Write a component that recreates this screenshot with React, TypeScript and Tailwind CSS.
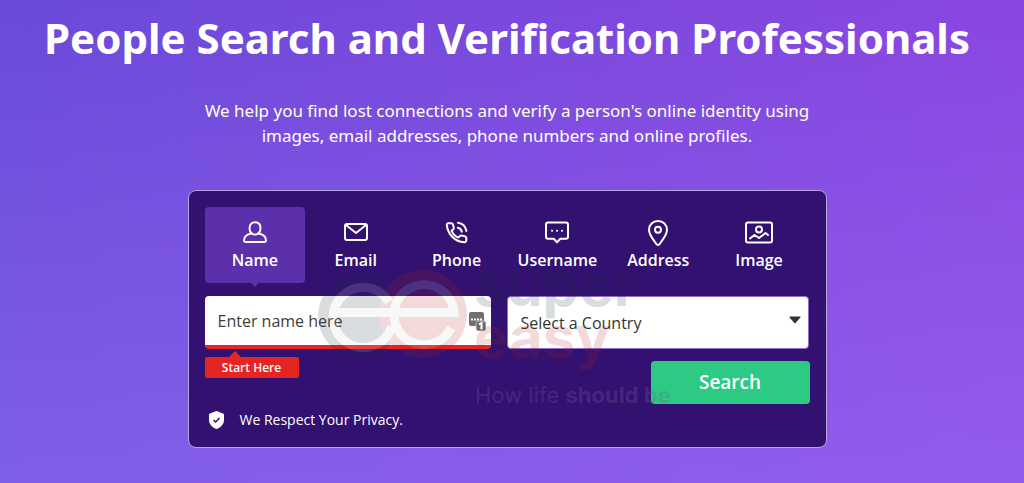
import type { ReactNode } from "react";

const stroke = {
  fill: "none",
  stroke: "currentColor",
  strokeWidth: 2,
  strokeLinecap: "round" as const,
  strokeLinejoin: "round" as const,
  "aria-hidden": true,
};

const tabs: { label: string; icon: ReactNode }[] = [
  {
    label: "Name",
    icon: (
      <svg width="28" height="28" viewBox="0 0 28 28" {...stroke}>
        <path d="M10.600 14.200C9.200 13 8.500 11.200 8.500 9.200 8.500 5.600 10.700 3.300 14 3.300s5.500 2.300 5.500 5.900c0 2-.7 3.800-2.100 5-1.900 1.700-4.900 1.700-6.800 0Z" />
        <path d="M10.600 14.600C6 15.300 3 18 3 21.600c0 .9.500 1.400 1.400 1.400h19.200c.9 0 1.400-.5 1.400-1.400 0-3.600-3-6.300-7.600-7" />
      </svg>
    ),
  },
  {
    label: "Email",
    icon: (
      <svg width="28" height="28" viewBox="0 0 28 28" {...stroke}>
        <rect x="3" y="5" width="22" height="16" rx="2" />
        <path d="m4 6 10 8 10-8" />
      </svg>
    ),
  },
  {
    label: "Phone",
    icon: (
      <svg width="28" height="28" viewBox="0 0 28 28" {...stroke}>
        <path d="M5.300 4.200h3c.8 0 1.400.4 1.600 1.100l.9 3.400c.2.600 0 1.200-.5 1.600l-1.700 1.500c1.400 3.200 3.700 5.500 6.800 6.800l1.500-1.600c.4-.5 1-.7 1.600-.5l3.700.9c.7.200 1.100.8 1.100 1.500v2.400c0 1.300-.8 2-2.100 1.900C11.800 22.600 5 15.400 3.800 6.300c-.1-1.200.4-2.100 1.500-2.100Z" />
        <path d="M14.800 8.700c2.200.5 3.500 1.900 4 4M15 3.800c4.400.6 7.600 3.800 8.400 8.200" />
      </svg>
    ),
  },
  {
    label: "Username",
    icon: (
      <svg width="28" height="28" viewBox="0 0 28 28" {...stroke}>
        <path d="M5 3.500h18c1.100 0 2 .9 2 2v12.200c0 1.100-.9 2-2 2h-5.700L14 23.300l-3.300-3.600H5c-1.100 0-2-.9-2-2V5.500c0-1.100.9-2 2-2Z" />
        <path d="M9 11.800h.1M14 11.800h.1M19 11.800h.1" />
      </svg>
    ),
  },
  {
    label: "Address",
    icon: (
      <svg width="28" height="28" viewBox="0 0 28 28" {...stroke}>
        <path d="M14 2c-5.200 0-9 3.900-9 8.800 0 5.400 4.500 10 7.300 14.200.8 1.200 2.600 1.200 3.400 0C18.500 20.800 23 16.200 23 10.800 23 5.900 19.200 2 14 2Z" />
        <circle cx="14" cy="10.700" r="3" />
      </svg>
    ),
  },
  {
    label: "Image",
    icon: (
      <svg width="28" height="28" viewBox="0 0 28 28" {...stroke}>
        <rect x="1" y="3.500" width="26" height="20" rx="2" />
        <circle cx="14" cy="10.500" r="3" />
        <path d="m5 19.500 4.500-3.500 4.500 3 6.500-5 2.500 2" />
      </svg>
    ),
  },
];

function Watermark() {
  return (
    <svg
      className="pointer-events-none absolute top-12 left-32"
      width="380"
      height="181"
      viewBox="317 239 380 181"
      aria-hidden="true"
    >
      <g opacity="0.16">
        <circle cx="360" cy="316" r="42" fill="#203040" />
        <circle cx="423" cy="314" r="44" fill="#b51f24" />
        <g fill="none" stroke="#d8d8d8" strokeWidth="9">
          <path d="M389 302a30 30 0 1 0 3 24M333 312.500h60" />
          <path d="M451 328a30 30 0 1 1 3-15.500h-58" />
        </g>
        <g fontFamily="Inter, sans-serif" fontWeight="700" fontSize="58">
          <text x="474" y="306" fill="#203040">super</text>
          <text x="474" y="358" fill="#b51f24">easy</text>
        </g>
      </g>
      <text
        x="475"
        y="403"
        fill="#68659a"
        fillOpacity="0.3"
        fontFamily="Inter, sans-serif"
        fontSize="22"
      >
        How life <tspan fontWeight="700">should be</tspan>
      </text>
    </svg>
  );
}

export default function App() {
  return (
    <main className="min-h-screen bg-[linear-gradient(to_bottom,rgba(150,120,255,0),rgba(160,125,255,0.4)),linear-gradient(to_right,#6a4ad8,#8a46e0)] pt-[11px] pr-6 pb-9 pl-3.5 font-['Open_Sans',sans-serif] text-white">
      <h1 className="text-center font-['Noto_Sans',sans-serif] text-[42px] leading-[54px] font-bold">
        People Search and Verification Professionals
      </h1>
      <p className="mx-auto mt-[33px] max-w-[640px] text-center font-['Noto_Sans',sans-serif] text-[17px] leading-[25px]">
        We help you find lost connections and verify a person's online identity using images, email
        addresses, phone numbers and online profiles.
      </p>

      <form
        className="relative mx-auto mt-[42px] max-w-[639px] rounded-lg border border-[#b7a5e0] bg-[#321170] px-4 pt-4 pb-[15px]"
        onSubmit={(e) => e.preventDefault()}
      >
        <div className="grid grid-cols-6" role="tablist">
          {tabs.map((tab, i) => (
            <button
              key={tab.label}
              type="button"
              role="tab"
              aria-selected={i === 0}
              className={
                i === 0
                  ? "relative flex h-19 flex-col items-center rounded-sm bg-[#5b30aa] pt-3 text-base leading-[26px] font-semibold"
                  : "flex h-19 flex-col items-center pt-3 text-base leading-[26px] font-semibold"
              }
            >
              {tab.icon}
              {tab.label}
              {i === 0 && (
                <span className="absolute top-full left-1/2 -translate-x-1/2 border-x-4 border-t-4 border-x-transparent border-t-[#5b30aa]" />
              )}
            </button>
          ))}
        </div>

        <div className="mt-[13px] grid grid-cols-[286fr_301fr] gap-4">
          <label className="relative block">
            <span className="sr-only">Name</span>
            <input
              type="text"
              placeholder="Enter name here"
              className="h-[53px] w-full rounded-sm border-b-4 border-[#e52424] bg-white px-[13px] text-base text-[#333] outline-none placeholder:text-[#3d3d3d]"
            />
            <svg
              className="absolute top-4 right-1"
              width="18"
              height="20"
              viewBox="0 0 18 20"
              aria-hidden="true"
            >
              <rect width="15" height="14" rx="2" fill="#6f6f6f" />
              <path d="M2 7.500h11" stroke="#fff" strokeWidth="2" strokeDasharray="2 1" />
              <rect x="7" y="9" width="10" height="10" rx="2" fill="#6f6f6f" stroke="#fff" strokeWidth="0.500" />
              <path d="m10 12.500 2.500-1.500v6.500" fill="none" stroke="#fff" strokeWidth="2" />
            </svg>
          </label>
          <label className="relative block">
            <span className="sr-only">Country</span>
            <select className="h-[53px] w-full appearance-none rounded-sm border border-[#8f6bd0] bg-white px-3 text-base text-[#333] outline-none">
              <option>Select a Country</option>
            </select>
            <svg
              className="absolute top-5 right-2"
              width="12"
              height="8"
              viewBox="0 0 12 8"
              aria-hidden="true"
            >
              <path d="M1 .5h10q1 .3.400 1L6.600 7q-.6.500-1.200 0L.6 1.500Q0 .8 1 .5Z" fill="#333" />
            </svg>
          </label>
        </div>

        <div className="flex items-start justify-between">
          <div>
            <div className="relative mt-2 w-[94px] rounded-xs bg-[#e52424] text-center text-xs leading-[21px] font-semibold">
              <span className="absolute bottom-full left-6 border-x-6 border-b-6 border-x-transparent border-b-[#e52424]" />
              Start Here
            </div>
            <p className="mt-[30px] flex items-center gap-4 pl-1 text-sm leading-6">
              <svg width="15" height="18" viewBox="0 0 15 18" aria-hidden="true">
                <path
                  d="M6.700.3q.8-.4 1.600 0l5.700 2.200q1 .4 1 1.500v5c0 3.700-2.700 7-6.700 8.700q-.8.4-1.600 0C2.700 16 0 12.700 0 9V4q0-1.100 1-1.500Z"
                  fill="#fff"
                />
                <path d="m4.500 9 2.200 2 3.800-4" fill="none" stroke="#321170" strokeWidth="1.500" />
              </svg>
              We Respect Your Privacy.
            </p>
          </div>
          <button
            type="submit"
            className="mt-3 h-[43px] w-[159px] rounded-sm bg-[#2dca84] text-[19px] font-semibold"
          >
            Search
          </button>
        </div>
        <Watermark />
      </form>
    </main>
  );
}
